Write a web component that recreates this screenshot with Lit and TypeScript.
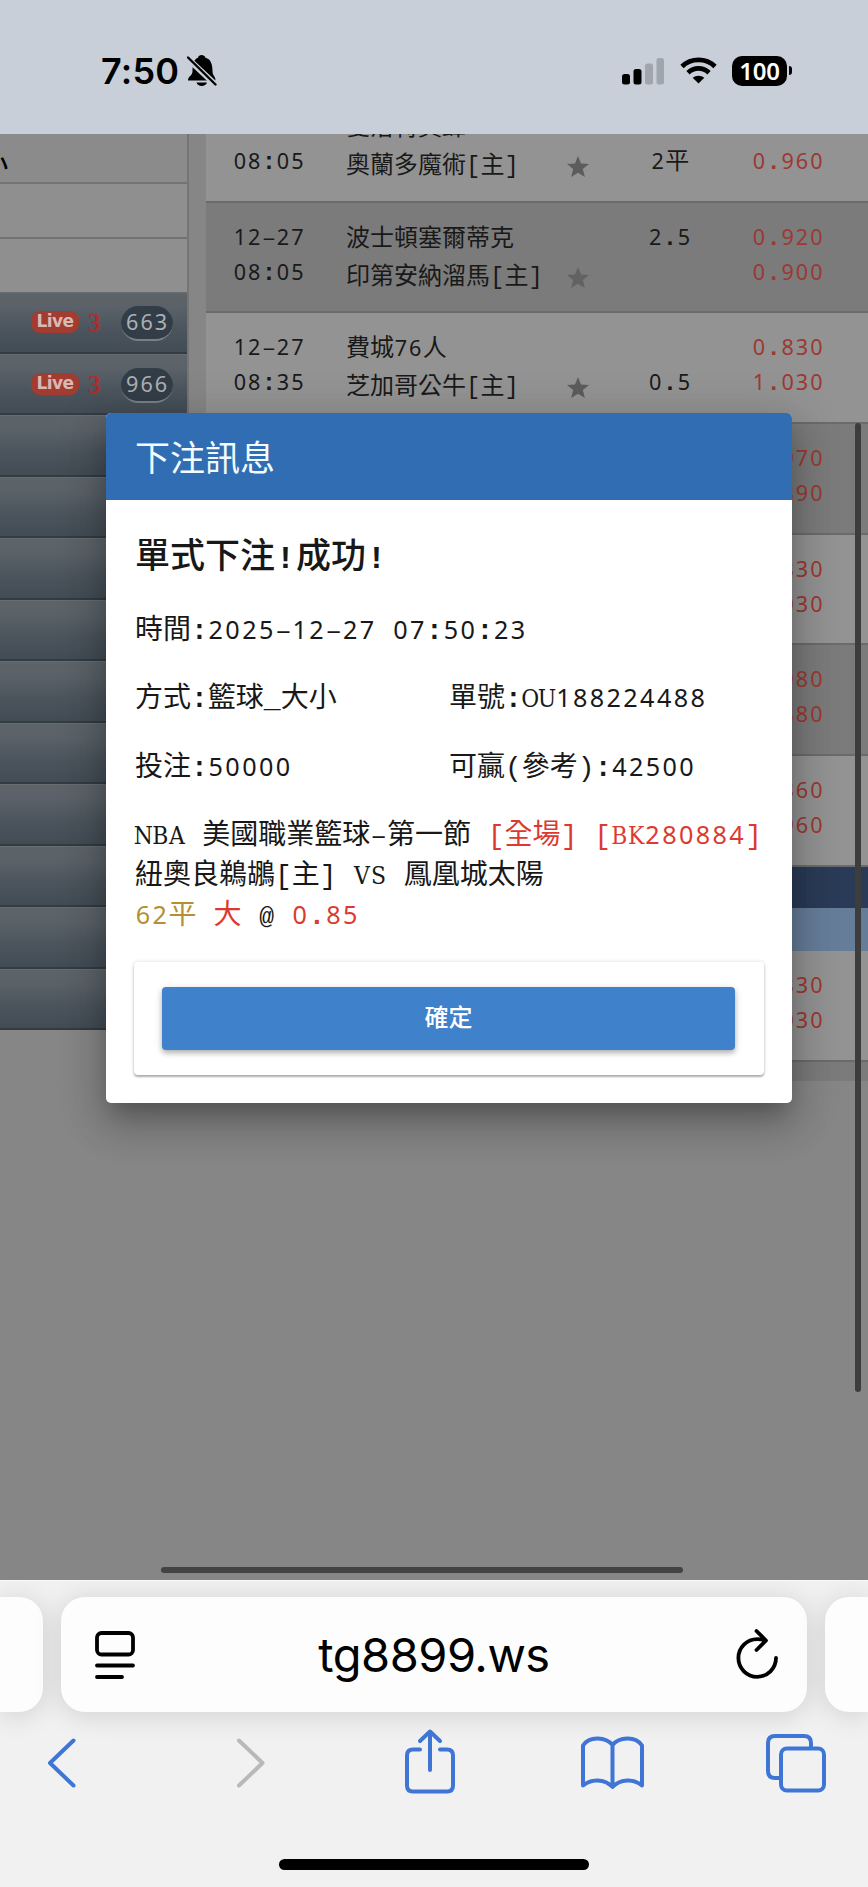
import { LitElement, html, css, nothing } from "lit";
import { customElement, property } from "lit/decorators.js";

const RUNS = /(\d+|[A-Z]+|[\[\]():.\-_@!]|[^\dA-Z\[\]():.\-_@!]+)/g;
const NAMES: Record<string, string> = { ":": "colon", ".": "dot", "-": "dash", _: "under", "@": "at" };

/* Sets half-width characters on a 0.6em grid next to full-width ones. */
function mono(text: string) {
  return (text.match(RUNS) ?? []).map((r) => {
    if (/^\d/.test(r)) return html`<span class="num">${r}</span>`;
    if (/^[A-Z]/.test(r)) return [...r].map((c) => html`<span class="cell serif">${c}</span>`);
    if (/^[\[\]():.\-_@!]/.test(r)) return html`<span class="cell ${NAMES[r] ?? "punct"}">${r === "-" ? "–" : r}</span>`;
    return r;
  });
}

const monoStyles = css`
  .num { font-family: "Noto Sans", sans-serif; font-size: 0.9em; line-height: 1; letter-spacing: 0.0945em; position: relative; left: 0.03em; }
  .cell { display: inline-flex; justify-content: center; width: 0.6em; white-space: pre; line-height: 1; }
  .serif { font-family: "DejaVu Serif Condensed", "DejaVu Serif", serif; font-stretch: condensed; font-size: 0.87em; width: 0.69em; }
  .punct, .dash, .under { font-family: "Liberation Mono", monospace; }
  .at { font-family: "Liberation Mono", monospace; font-size: 0.88em; width: 0.682em; }
  .colon, .dot { font-family: "Liberation Mono", monospace; font-weight: 700; }
`;

interface Game { t1: string; t2: string; a: string; b: string; l1: string; l2: string; o1: string; o2: string; }

const games: Game[] = [
  { t1: "", t2: "08:05", a: "夏洛特黃蜂", b: "奧蘭多魔術[主]", l1: "", l2: "2平", o1: "", o2: "0.960" },
  { t1: "12-27", t2: "08:05", a: "波士頓塞爾蒂克", b: "印第安納溜馬[主]", l1: "2.5", l2: "", o1: "0.920", o2: "0.900" },
  { t1: "12-27", t2: "08:35", a: "費城76人", b: "芝加哥公牛[主]", l1: "", l2: "0.5", o1: "0.830", o2: "1.030" },
  { t1: "", t2: "", a: "", b: "", l1: "", l2: "", o1: "0.970", o2: "0.890" },
  { t1: "", t2: "", a: "", b: "", l1: "", l2: "", o1: "0.830", o2: "1.030" },
  { t1: "", t2: "", a: "", b: "", l1: "", l2: "", o1: "0.980", o2: "0.880" },
  { t1: "", t2: "", a: "", b: "", l1: "", l2: "", o1: "0.860", o2: "0.960" },
];
const lastGame: Game = { t1: "", t2: "", a: "", b: "", l1: "", l2: "", o1: "0.830", o2: "1.030" };

@customElement("phone-status")
class PhoneStatus extends LitElement {
  static styles = css`
    :host { display: flex; height: 134px; box-sizing: border-box; padding: 53px 76px 0 101px; background: #c8cfd8; justify-content: space-between; align-items: flex-start; }
    .left, .right { display: flex; height: 36px; align-items: center; }
    .time { font: 600 36px/36px Inter, sans-serif; letter-spacing: 0.2px; color: #000; }
    .bell { margin-left: 8px; }
    .right { height: 35px; }
    svg { display: block; }
    .wifi { margin-left: 15px; }
    .battery { margin-left: 15px; width: 55px; height: 30px; border-radius: 10px; background: #000; color: #fff; font: 600 24px/30px "Noto Sans", sans-serif; text-align: center; letter-spacing: -0.2px; }
    .tip { width: 3px; height: 9px; margin-left: 2px; border-radius: 0 4px 4px 0; background: #000; }
  `;
  render() {
    return html`<div class="left"><span class="time">7:50</span>
      <svg class="bell" width="30" height="32" viewBox="0 0 30 32"><path d="M1 25.500c0-4.500 4.500-4.500 4.500-9.500C5.500 8 7.500 4 11 2.800c.5-3.600 6.500-3.600 7.500 0C23.500 4 25.500 9 25.500 16c0 5 3 5 3 9.500zM9.500 27.500h10.500c-1 4.500-9.500 4.500-10.500 0z"/><path d="M-1 2l31 29" stroke="#c8cfd8" stroke-width="6"/><path d="M1 2.500l27.500 27" stroke="#000" stroke-width="2.400" stroke-linecap="round"/></svg></div>
      <div class="right">
        <svg width="43" height="28" viewBox="0 0 43 28"><rect x="0" y="17" width="8" height="10.500" rx="2.500"/><rect x="11.500" y="12" width="8" height="15.500" rx="2.500"/><g fill="#a0a6ad"><rect x="23" y="6.500" width="8" height="21" rx="2.500"/><rect x="34.500" y="1" width="7.500" height="26.500" rx="2.500"/></g></svg>
        <svg class="wifi" width="37" height="27" viewBox="0 0 37 27"><g fill="none" stroke="#000" stroke-width="4.700"><path d="M2 9.500C11 .6 26 .6 35 9.500"/><path d="M8 15.700c6-5.700 15-5.700 21 0"/></g><path d="M18.500 26.500l-5.800-5.700c3-2.800 8.600-2.800 11.600 0z"/></svg>
        <div class="battery">100</div><div class="tip"></div>
      </div>`;
  }
}

@customElement("sport-menu")
class SportMenu extends LitElement {
  static styles = [monoStyles, css`
    :host { display: block; width: 187px; border-right: 2px solid #757575; height: 896px; background: #8e8e8e; font: 24px/36px "Noto Sans CJK TC", sans-serif; overflow: hidden; flex: none; }
    .head { height: 48px; border-bottom: 2px solid #737373; background: #8b8b8b; color: #000; overflow: hidden; }
    .clip { display: block; margin: 10px 0 0 -16px; font-weight: 500; }
    .plain { height: 53px; border-bottom: 2px solid #737373; background: #8f8f8f; }
    .plain.last { border: 0; height: 53px; }
    .bar { height: 61.5px; box-sizing: border-box; display: flex; align-items: center; justify-content: flex-end; padding: 0 14px 0 0; background: linear-gradient(#5d6469, #5a6168 25%, #4c555d 60%, #424c55); border-top: 1px solid #676d71; border-bottom: 2px solid #333b43; }
    .live { width: 48px; height: 22px; border-radius: 9px; background: #a23b30; color: #d8b9b3; font: 700 17px/20px "DejaVu Sans", sans-serif; text-align: center; letter-spacing: -0.6px; }
    .three { width: 14px; margin: 2px 19px 0 9px; color: #a92f30; font: 700 26px/24px "Liberation Serif", serif; }
    .count { box-sizing: border-box; width: 52px; height: 35px; margin-top: 3px; border-radius: 18px; background: #323d48; border-bottom: 2px solid #788087; color: #a9b0b5; font-size: 24px; line-height: 28px; text-align: center; }
  `];
  render() {
    const counts = ["663", "966"];
    return html`<div class="head"><span class="clip">小</span></div><div class="plain"></div><div class="plain last"></div>
      ${Array.from({ length: 12 }, (_, i) => html`<div class="bar">${counts[i]
        ? html`<span class="live">Live</span><span class="three">3</span><span class="count">${mono(counts[i])}</span>` : nothing}</div>`)}`;
  }
}

@customElement("odds-row")
class OddsRow extends LitElement {
  @property({ attribute: false }) game!: Game;
  static styles = [monoStyles, css`
    :host { display: grid; grid-template-columns: 113px 200px 60px 128px 1fr; padding: 14px 0 0 27px; height: 110.7px; box-sizing: border-box; border-bottom: 2px solid #6b6b6b; background: #939393; color: #191919; font: 24px/35px "Noto Sans CJK TC", sans-serif; white-space: nowrap; }
    :host([shade]) { background: #7b7b7b; }
    :host([shade]) .star { fill: #626262; }
    .star { display: block; margin: 50px 0 0 21px; fill: #5c5c5c; }
    .line { text-align: center; }
    .odds { color: #9c3932; padding-left: 18px; }
    .l { height: 35px; }
    .team { padding-top: 1px; }
    .team .l { height: 38px; }
  `];
  render() {
    const g = this.game;
    return html`<div><div class="l">${mono(g.t1)}</div><div class="l">${mono(g.t2)}</div></div>
      <div class="team"><div class="l">${mono(g.a)}</div><div class="l">${mono(g.b)}</div></div>
      <div>${g.b ? html`<svg class="star" width="22" height="22" viewBox="0 0 22 22"><path d="M11 0l3 7.600 8 .5-6.200 5 2.100 8L11 16.700 4.100 21.100l2.100-8L0 8.100l8-.5z"/></svg>` : nothing}</div>
      <div class="line"><div class="l">${mono(g.l1)}</div><div class="l">${mono(g.l2)}</div></div>
      <div class="odds"><div class="l">${mono(g.o1)}</div><div class="l">${mono(g.o2)}</div></div>`;
  }
}

@customElement("bet-dialog")
class BetDialog extends LitElement {
  static styles = [monoStyles, css`
    :host { display: block; box-sizing: border-box; width: 686px; height: 690px; border-radius: 5px; overflow: hidden; background: #fff; color: #181818; font: 28px/40.6px "Noto Sans CJK TC", sans-serif; white-space: nowrap; box-shadow: 0 14px 20px -7px rgba(0,0,0,.2), 0 24px 38px 3px rgba(0,0,0,.14), 0 9px 46px 8px rgba(0,0,0,.14); }
    header { height: 87px; padding-left: 29px; background: #316db2; color: #f2fbff; font-size: 35px; line-height: 85px; }
    .body { padding: 26px 28px 0 29px; }
    h2 { margin: 0 0 27px; font-size: 35px; font-weight: 500; line-height: 54px; height: 54px; }
    h2 .cell { font-weight: 700; font-size: 0.9em; width: 0.667em; }
    .row { display: grid; grid-template-columns: 314px 1fr; height: 40px; margin-bottom: 28.3px; line-height: 40px; }
    .match { height: 122px; }
    .match div { height: 40.3px; }
    .red { color: #dc3a30; }
    .gold { color: #b58f30; }
    .actions { margin: 28px 0 0 -1px; box-sizing: border-box; width: 630px; height: 113px; padding: 25px 28px 0; border-radius: 4px; box-shadow: 0 2px 2px rgba(0,0,0,.28), 0 0 4px rgba(0,0,0,.14); }
    button { display: block; width: 573px; height: 63px; border: 0; padding: 0 0 6px; border-radius: 4px; background: #4081cb; color: #fff; font: 500 24px/57px "Noto Sans CJK TC", sans-serif; box-shadow: 0 3px 5px rgba(0,0,0,.22), 0 2px 9px rgba(0,0,0,.14); }
  `];
  render() {
    return html`<header>下注訊息</header><div class="body">
      <h2>${mono("單式下注!成功!")}</h2>
      <div class="row"><span>${mono("時間:2025-12-27")}<span class="cell"> </span>${mono("07:50:23")}</span></div>
      <div class="row"><span>${mono("方式:籃球_大小")}</span><span>${mono("單號:OU188224488")}</span></div>
      <div class="row"><span>${mono("投注:50000")}</span><span>${mono("可贏(參考):42500")}</span></div>
      <div class="match">
        <div>${mono("NBA")}<span class="cell"> </span>${mono("美國職業籃球-第一節")}<span class="cell"> </span><span class="red">${mono("[全場]")}<span class="cell"> </span>${mono("[BK280884]")}</span></div>
        <div>${mono("紐奧良鵜鶘[主]")}<span class="cell"> </span>${mono("VS")}<span class="cell"> </span>鳳凰城太陽</div>
        <div><span class="gold">${mono("62平")}</span><span class="cell"> </span><span class="red">大</span><span class="cell"> </span>${mono("@")}<span class="cell"> </span><span class="red">${mono("0.85")}</span></div>
      </div>
      <div class="actions"><button>確定</button></div></div>`;
  }
}

@customElement("browser-bar")
class BrowserBar extends LitElement {
  static styles = css`
    :host { display: block; height: 307px; background: #f1f1f1; border-top: 1px solid #fafafa; box-sizing: border-box; position: relative; overflow: hidden; }
    .tabs { display: grid; grid-template-columns: 43px 746px 43px; column-gap: 18px; margin-top: 16px; height: 115px; }
    .tab { background: #fdfdfd; box-shadow: 0 3px 28px rgba(0,0,0,.14); }
    .prev { border-radius: 0 24px 24px 0; }
    .next { border-radius: 24px 0 0 24px; }
    .main { border-radius: 24px; display: flex; align-items: center; justify-content: space-between; padding: 0 28px 0 33px; }
    .url { font: 400 47px/60px Inter, sans-serif; letter-spacing: -0.5px; color: #000; margin: 1px 0 0 -3px; }
    svg { display: block; fill: none; stroke: #000; stroke-width: 3.8; stroke-linecap: round; stroke-linejoin: round; }
    .tools { display: grid; grid-template-columns: repeat(5, 183.5px); justify-items: center; margin: 16px 0 0 -31px; }
    .tools svg { stroke: #3f76d6; stroke-width: 4; position: relative; z-index: 1; }
    .tools .off { stroke: #b9b9b9; }
    .home { position: absolute; left: 279px; top: 278px; width: 310px; height: 11px; border-radius: 6px; background: #000; }
  `;
  render() {
    return html`<div class="tabs"><div class="tab prev"></div><div class="tab main">
        <svg width="42" height="50" viewBox="0 0 42 50"><rect x="3" y="3" width="36" height="21.500" rx="4.500"/><path d="M3 35.500h36M3 47h25"/></svg>
        <span class="url">tg8899.ws</span>
        <svg width="44" height="52" viewBox="0 0 44 52"><path d="M41 29a18.800 18.800 0 1 1-18.800-18.800q4 0 8 .8M21.500 2l9.500 9.500-9.500 9.500"/></svg>
      </div><div class="tab next"></div></div>
      <div class="tools">
        <svg width="64" height="70" viewBox="0 0 64 70"><path d="M44.500 12.500L21 35 44.500 57.500"/></svg>
        <svg class="off" width="64" height="70" viewBox="0 0 64 70"><path d="M27 12.500L50.500 35 27 57.500"/></svg>
        <svg width="64" height="70" viewBox="0 0 64 70"><path d="M27 21.500h-7q-6 0-6 6v30q0 6 6 6h34q6 0 6-6v-30q0-6-6-6h-7" transform="translate(-3 0)"/><path d="M34 42V4M24 13l10-9.500 10 9.500"/></svg>
        <svg width="68" height="70" viewBox="0 0 68 70"><path d="M35.500 17C29 9 12.500 7.500 6 17.500v40c8-7 21.500-7 29.500 1.500 8-8.500 21.500-8.500 29.500-1.500v-40C58.500 7.500 42 9 35.500 17zV58"/></svg>
        <svg width="64" height="70" viewBox="0 0 64 70"><path d="M18 50h-5q-7 0-7-7V15q0-7 7-7h29q7 0 7 7v5" transform="translate(-1 0)"/><rect x="18" y="20.500" width="43" height="42" rx="6"/></svg>
      </div>
      <div class="home"></div>`;
  }
}

@customElement("app-root")
class AppRoot extends LitElement {
  static styles = css`
    :host { display: block; position: relative; width: 868px; height: 1887px; overflow: hidden; background: #868686; }
    .page { display: flex; height: 1446px; background: #868686; overflow: hidden; gap: 17px; }
    .table { width: 662px; height: 947px; overflow: hidden; background: #7b7b7b; }
    .inner { margin-top: -42px; }
    .navy { height: 41px; background: #2a3b57; }
    .sky { height: 43px; background: #667d99; }
    .dialog { position: absolute; left: 106px; top: 413px; }
    .vbar { position: absolute; left: 855px; top: 423px; width: 6px; height: 969px; border-radius: 3px; background: #3d3d3d; }
    .hbar { position: absolute; left: 161px; top: 1567px; width: 522px; height: 6px; border-radius: 3px; background: #434343; }
  `;
  render() {
    return html`<phone-status></phone-status>
      <div class="page"><sport-menu></sport-menu><div class="table"><div class="inner">
        ${games.map((g, i) => html`<odds-row .game=${g} ?shade=${i % 2 === 1}></odds-row>`)}
        <div class="navy"></div><div class="sky"></div><odds-row .game=${lastGame}></odds-row></div></div></div>
      <browser-bar></browser-bar>
      <bet-dialog class="dialog"></bet-dialog><div class="vbar"></div><div class="hbar"></div>`;
  }
}
